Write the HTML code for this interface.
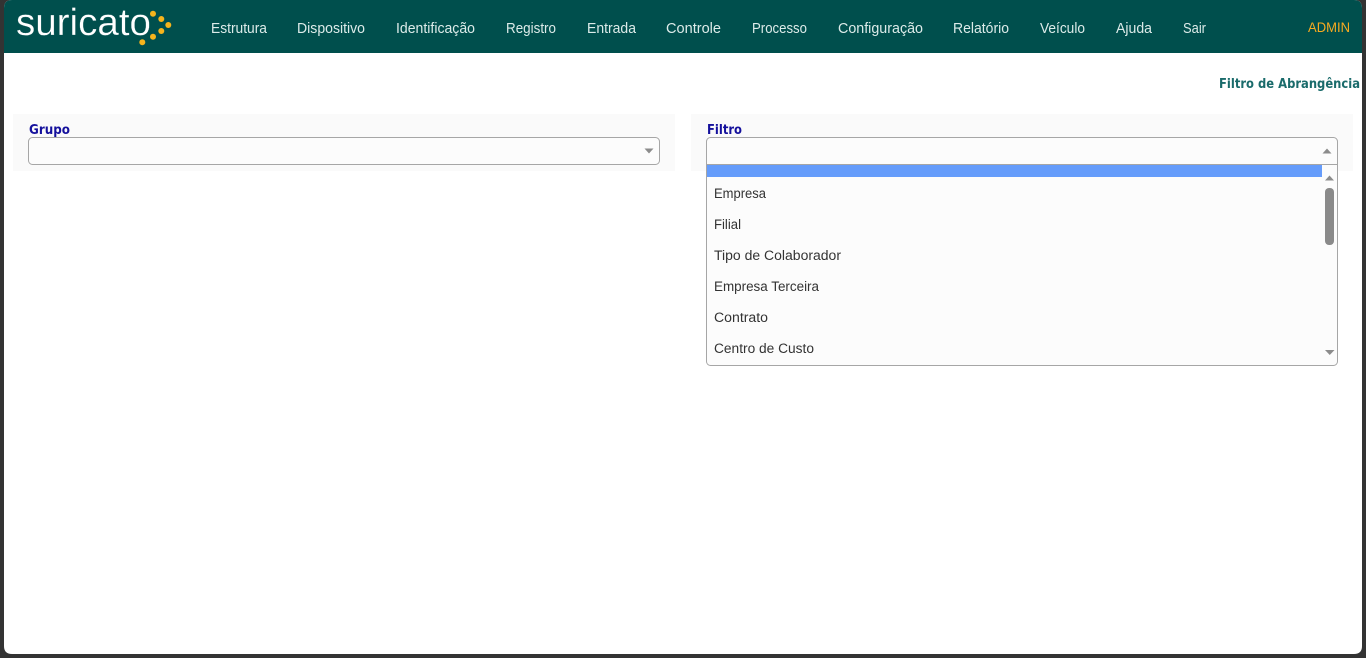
<!DOCTYPE html>
<html lang="pt-BR">
<head>
<meta charset="utf-8">
<title>Suricato</title>
<style>
html,body{margin:0;padding:0;width:1366px;height:658px;overflow:hidden;background:#333}
svg{position:absolute;left:0;top:0;display:block}
text{font-family:"Liberation Sans",sans-serif}
.n{font-size:14.5px;fill:#dcebe9}
.o{font-size:13.5px;fill:#333}
.l{font-family:"DejaVu Sans",sans-serif;font-size:13.5px;font-weight:bold;fill:#14109c}
.t{font-family:"DejaVu Sans",sans-serif;font-size:13.5px;font-weight:bold;fill:#1a6b6b}
</style>
</head>
<body>
<svg width="1366" height="658" viewBox="0 0 1366 658" xmlns="http://www.w3.org/2000/svg">
<rect width="1366" height="658" fill="#333"/>
<path d="M12 0H1354Q1362 0 1362 8V646Q1362 654 1354 654H12Q4 654 4 646V8Q4 0 12 0Z" fill="#fff"/>
<path d="M12 0H1354Q1362 0 1362 8V53H4V8Q4 0 12 0Z" fill="#004f4d"/>

<text x="16" y="35" font-size="38" fill="#fff" stroke="#004f4d" stroke-width=".25" textLength="135" lengthAdjust="spacingAndGlyphs">suricato</text>
<g fill="#f6b41c">
<circle cx="153" cy="13.7" r="3"/><circle cx="161.3" cy="19" r="3"/><circle cx="168.3" cy="25" r="3"/>
<circle cx="161.3" cy="31" r="3"/><circle cx="153" cy="36.7" r="3"/><circle cx="142.3" cy="42.3" r="3"/>
</g>

<g class="nav">
<text class="n" x="211" y="33" textLength="56" lengthAdjust="spacingAndGlyphs">Estrutura</text>
<text class="n" x="297" y="33" textLength="68" lengthAdjust="spacingAndGlyphs">Dispositivo</text>
<text class="n" x="396" y="33" textLength="79" lengthAdjust="spacingAndGlyphs">Identificação</text>
<text class="n" x="506" y="33" textLength="50" lengthAdjust="spacingAndGlyphs">Registro</text>
<text class="n" x="587" y="33" textLength="49" lengthAdjust="spacingAndGlyphs">Entrada</text>
<text class="n" x="666" y="33" textLength="55" lengthAdjust="spacingAndGlyphs">Controle</text>
<text class="n" x="752" y="33" textLength="55" lengthAdjust="spacingAndGlyphs">Processo</text>
<text class="n" x="838" y="33" textLength="85" lengthAdjust="spacingAndGlyphs">Configuração</text>
<text class="n" x="953" y="33" textLength="56" lengthAdjust="spacingAndGlyphs">Relatório</text>
<text class="n" x="1040" y="33" textLength="45" lengthAdjust="spacingAndGlyphs">Veículo</text>
<text class="n" x="1116" y="33" textLength="36" lengthAdjust="spacingAndGlyphs">Ajuda</text>
<text class="n" x="1183" y="33" textLength="23" lengthAdjust="spacingAndGlyphs">Sair</text>
<text x="1308" y="32" font-size="14" fill="#f9ab20" textLength="42" lengthAdjust="spacingAndGlyphs">ADMIN</text>
</g>

<text class="t" x="1219" y="88" textLength="141" lengthAdjust="spacingAndGlyphs">Filtro de Abrangência</text>

<rect x="13" y="114" width="662" height="57" fill="#fafafa"/>
<rect x="691" y="114" width="662" height="57" fill="#fafafa"/>

<text class="l" x="29" y="134" textLength="41" lengthAdjust="spacingAndGlyphs">Grupo</text>
<text class="l" x="707" y="134" textLength="35" lengthAdjust="spacingAndGlyphs">Filtro</text>

<rect x="28.5" y="137.5" width="631" height="27" rx="4" fill="#fcfcfc" stroke="#a6a6a6"/>
<path d="M644.5 148.5h9l-4.500 5z" fill="#8c8c8c"/>

<rect x="706.5" y="137.500" width="631" height="228" rx="4" fill="#fcfcfc" stroke="#a6a6a6"/>
<path d="M1322.500 153.500h9l-4.500-5z" fill="#8c8c8c"/>
<rect x="707" y="164" width="630" height="1" fill="#a6a6a6"/>
<rect x="707" y="165" width="615" height="12" fill="#659cfb"/>

<path d="M1325 180.500h9l-4.500-5z" fill="#8c8c8c"/>
<rect x="1325" y="188" width="9" height="57" rx="4" fill="#8a8a8a"/>
<path d="M1325 350h9.500l-4.750 5z" fill="#8c8c8c"/>

<text class="o" x="714" y="198" textLength="52" lengthAdjust="spacingAndGlyphs">Empresa</text>
<text class="o" x="714" y="229" textLength="27" lengthAdjust="spacingAndGlyphs">Filial</text>
<text class="o" x="714" y="260" textLength="127" lengthAdjust="spacingAndGlyphs">Tipo de Colaborador</text>
<text class="o" x="714" y="291" textLength="105" lengthAdjust="spacingAndGlyphs">Empresa Terceira</text>
<text class="o" x="714" y="322" textLength="54" lengthAdjust="spacingAndGlyphs">Contrato</text>
<text class="o" x="714" y="353" textLength="100" lengthAdjust="spacingAndGlyphs">Centro de Custo</text>
</svg>
</body>
</html>
